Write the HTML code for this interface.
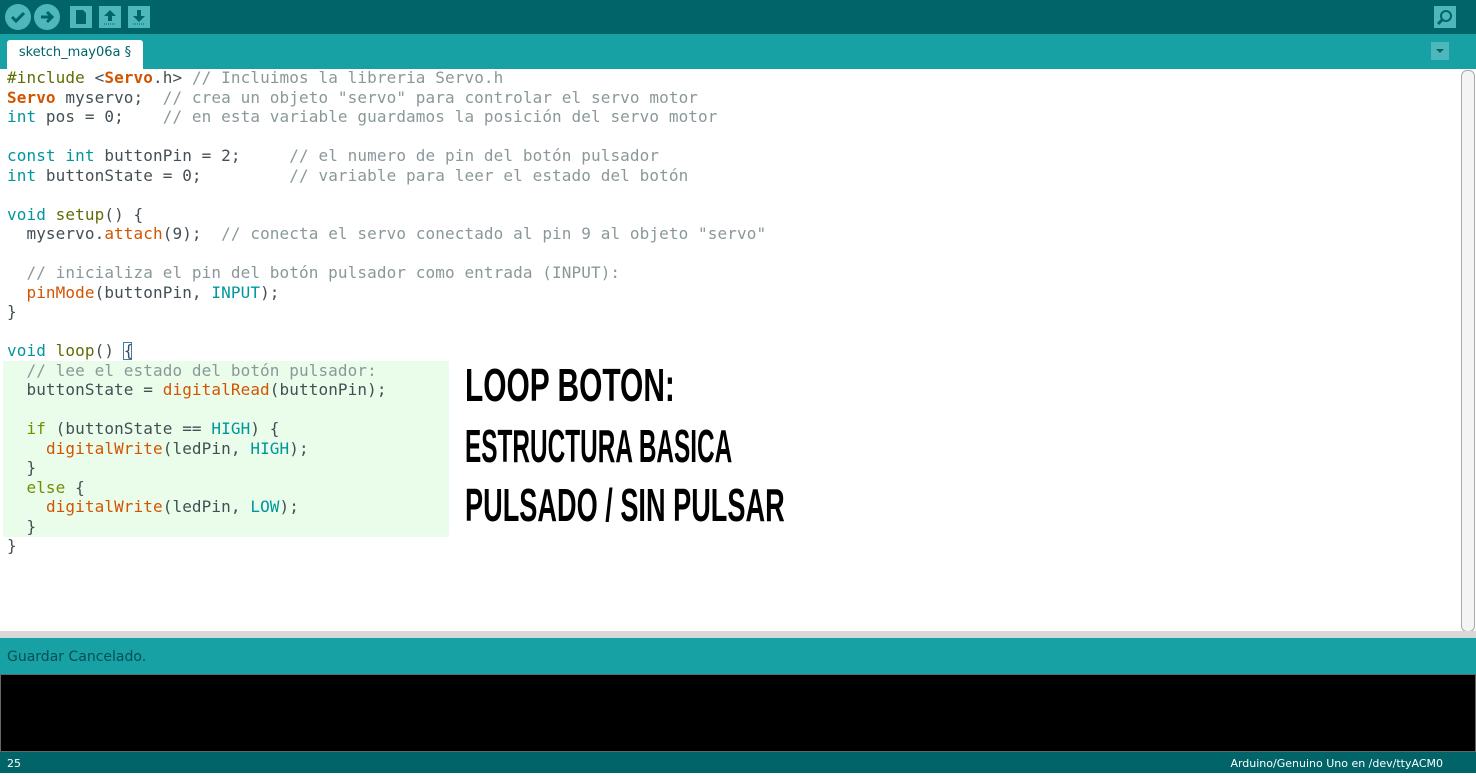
<!DOCTYPE html><html><head><style>
body{margin:0;width:1476px;height:773px;overflow:hidden;background:#fff;font-family:"DejaVu Sans","Liberation Sans",sans-serif;position:relative}
.a{position:absolute}
#tb{left:0;top:0;width:1476px;height:34px;background:#006468}
.c{width:26px;height:26px;border-radius:50%;background:#4db7bb;top:4px}
.s{width:22px;height:22px;background:#4db7bb;top:6px}
#tabs{left:0;top:34px;width:1476px;height:35px;background:#17a1a5}
#tab{left:7px;top:40px;width:136px;height:29px;background:#fff;border-radius:3px 3px 0 0;font-size:13px;color:#006468;line-height:26px;text-align:center}
pre{margin:0;font-family:"DejaVu Sans Mono","Liberation Mono",monospace;font-size:16px;letter-spacing:0.1px;line-height:19.5px;color:#434f54;position:absolute;left:7px;top:68px}
.k{color:#00979c}.o{color:#d35400}.g{color:#8a9899}.f{color:#5e6d03}.i{color:#728e00}.b{font-weight:bold;color:#d35400}
#hl{left:3px;top:361px;width:446px;height:176px;background:#eafcea}
.h{font-family:"Liberation Sans Narrow","Liberation Sans",sans-serif;font-weight:bold;font-size:46px;color:#000;left:465px;transform-origin:left;white-space:nowrap}
</style></head><body>
<div class="a" id="tb"></div>
<div class="a c" style="left:5px"><svg width="26" height="26"><path d="M7 13l4 4 8-8" stroke="#006468" stroke-width="3" fill="none"/></svg></div>
<div class="a c" style="left:34px"><svg width="26" height="26"><path d="M7 13h10M13 8l5 5-5 5" stroke="#006468" stroke-width="3" fill="none"/></svg></div>
<div class="a s" style="left:70px"><svg width="22" height="22"><path d="M6 4h7l3 3v11H6z" fill="#006468"/></svg></div>
<div class="a s" style="left:99px"><svg width="22" height="22"><path d="M11 4l6 6h-4v5H9v-5H5z" fill="#006468"/><path d="M5 18h12" stroke="#006468" stroke-dasharray="1 1"/></svg></div>
<div class="a s" style="left:128px"><svg width="22" height="22"><path d="M11 16l6-6h-4V4H9v6H5z" fill="#006468"/><path d="M5 18h12" stroke="#006468" stroke-dasharray="1 1"/></svg></div>
<div class="a s" style="left:1434px"><svg width="22" height="22"><circle cx="12" cy="10" r="5" stroke="#006468" stroke-width="2" fill="none"/><path d="M8 14l-4 4" stroke="#006468" stroke-width="3"/></svg></div>
<div class="a" id="tabs"></div>
<div class="a" id="tab">sketch_may06a §</div>
<div class="a" style="left:1431px;top:42px;width:18px;height:18px;background:#4db7bb"><svg width="18" height="18"><path d="M5 7h8l-4 4z" fill="#006468"/></svg></div>
<div class="a" style="left:1461px;top:70px;width:12px;height:560px;border:1px solid #aaa;border-radius:6px;background:#f4f4f4"></div>
<div class="a" id="hl"></div>
<div class="a" style="left:123px;top:342px;width:9px;height:18px;border:1px solid #3b7ea8;box-sizing:border-box"></div>
<pre><span class="f">#include</span> &lt;<span class="b">Servo</span>.h&gt; <span class="g">// Incluimos la libreria Servo.h</span>
<span class="b">Servo</span> myservo;  <span class="g">// crea un objeto "servo" para controlar el servo motor</span>
<span class="k">int</span> pos = 0;    <span class="g">// en esta variable guardamos la posición del servo motor</span>

<span class="k">const</span> <span class="k">int</span> buttonPin = 2;     <span class="g">// el numero de pin del botón pulsador</span>
<span class="k">int</span> buttonState = 0;         <span class="g">// variable para leer el estado del botón</span>

<span class="k">void</span> <span class="f">setup</span>() {
  myservo.<span class="o">attach</span>(9);  <span class="g">// conecta el servo conectado al pin 9 al objeto "servo"</span>

  <span class="g">// inicializa el pin del botón pulsador como entrada (INPUT):</span>
  <span class="o">pinMode</span>(buttonPin, <span class="k">INPUT</span>);
}

<span class="k">void</span> <span class="f">loop</span>() {
  <span class="g">// lee el estado del botón pulsador:</span>
  buttonState = <span class="o">digitalRead</span>(buttonPin);

  <span class="i">if</span> (buttonState == <span class="k">HIGH</span>) {
    <span class="o">digitalWrite</span>(ledPin, <span class="k">HIGH</span>);
  }
  <span class="i">else</span> {
    <span class="o">digitalWrite</span>(ledPin, <span class="k">LOW</span>);
  }
}</pre>
<div class="a h" style="top:358px;transform:scaleX(0.65)">LOOP BOTON:</div>
<div class="a h" style="top:419px;transform:scaleX(0.53)">ESTRUCTURA BASICA</div>
<div class="a h" style="top:478px;transform:scaleX(0.59)">PULSADO / SIN PULSAR</div>
<div class="a" style="left:0;top:631px;width:1476px;height:7px;background:#d8d8d8"></div>
<div class="a" style="left:0;top:638px;width:1476px;height:36px;background:#17a1a5;color:#064f52;font-size:14px;line-height:38px;padding-left:7px;box-sizing:border-box">Guardar Cancelado.</div>
<div class="a" style="left:0;top:674px;width:1476px;height:78px;background:#000;border:1px solid #666;box-sizing:border-box"></div>
<div class="a" style="left:0;top:752px;width:1476px;height:21px;background:#006468;color:#fff;font-size:11px;line-height:24px"><span style="position:absolute;left:7px">25</span><span style="position:absolute;right:33px">Arduino/Genuino Uno en /dev/ttyACM0</span></div>
</body></html>
